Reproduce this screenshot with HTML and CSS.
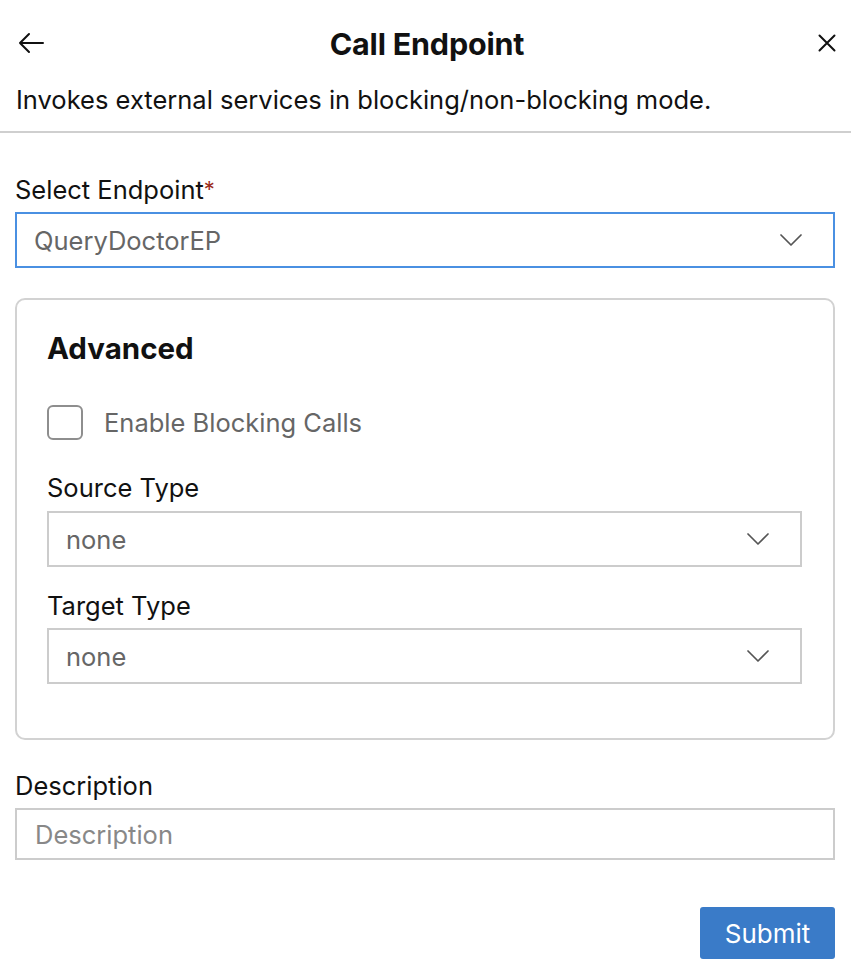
FILE: index.html
```html
<!DOCTYPE html>
<html lang="en">
<head>
<meta charset="utf-8">
<title>Call Endpoint</title>
<link rel="stylesheet" href="styles.css">
</head>
<body>
<div class="panel">
  <header class="header">
    <button class="icon-btn back" aria-label="Back">
      <svg width="26" height="22" viewBox="0 0 26 22" fill="none" stroke="#111" stroke-width="2" stroke-linecap="round" stroke-linejoin="round"><path d="M25 11H2M11 2L2 11l9 9"/></svg>
    </button>
    <h1 class="title">Call Endpoint</h1>
    <button class="icon-btn close" aria-label="Close">
      <svg width="18" height="18" viewBox="0 0 18 18" fill="none" stroke="#111" stroke-width="2" stroke-linecap="round"><path d="M1.5 1.5l15 15M16.5 1.5l-15 15"/></svg>
    </button>
  </header>
  <p class="subtitle">Invokes external services in blocking/non-blocking mode.</p>

  <form class="form">
    <label class="label">Select Endpoint<span class="req">*</span></label>
    <div class="select select-active">
      <span class="select-value">QueryDoctorEP</span>
      <svg class="chev" width="22" height="12" viewBox="0 0 22 12" fill="none" stroke="#555" stroke-width="1.7" stroke-linecap="round" stroke-linejoin="round"><path d="M1 1l10 10L21 1"/></svg>
    </div>

    <section class="card">
      <h2 class="card-title">Advanced</h2>
      <div class="check-row">
        <span class="checkbox"></span>
        <span class="check-label">Enable Blocking Calls</span>
      </div>
      <label class="label label-source">Source Type</label>
      <div class="select">
        <span class="select-value">none</span>
        <svg class="chev" width="22" height="12" viewBox="0 0 22 12" fill="none" stroke="#555" stroke-width="1.7" stroke-linecap="round" stroke-linejoin="round"><path d="M1 1l10 10L21 1"/></svg>
      </div>
      <label class="label label-target">Target Type</label>
      <div class="select">
        <span class="select-value">none</span>
        <svg class="chev" width="22" height="12" viewBox="0 0 22 12" fill="none" stroke="#555" stroke-width="1.7" stroke-linecap="round" stroke-linejoin="round"><path d="M1 1l10 10L21 1"/></svg>
      </div>
    </section>

    <label class="label label-desc">Description</label>
    <div class="input"><span class="placeholder">Description</span></div>

    <div class="actions">
      <button type="button" class="submit">Submit</button>
    </div>
  </form>
</div>
</body>
</html>
```

FILE: styles.css
```css
* { box-sizing: border-box; }
html, body {
  margin: 0;
  background: #fff;
  font-family: Inter, "Noto Sans", "Liberation Sans", sans-serif;
  color: #111;
}
.panel { width: 851px; }
.header {
  height: 86px;
  display: flex;
  align-items: center;
  justify-content: space-between;
  padding: 0 15px 0 18px;
}
.icon-btn {
  background: none;
  border: 0;
  padding: 0;
  width: 26px;
  height: 24px;
  display: flex;
  align-items: center;
}
.back { justify-content: flex-start; }
.close { justify-content: flex-end; }
.title {
  margin: 0;
  font-size: 30.5px;
  font-weight: 700;
  letter-spacing: -0.2px;
}
.subtitle {
  margin: 0;
  font-size: 25.5px;
  line-height: 28px;
  padding: 0 16px 17px;
  border-bottom: 2px solid #cfcfcf;
}
.form {
  padding: 42px 16px 0 15px;
  display: flex;
  flex-direction: column;
}
.label {
  display: block;
  font-size: 25.5px;
  line-height: 28px;
  margin-bottom: 8px;
  color: #111;
}
.req { color: #9b2c1c; font-size: 22px; vertical-align: 2px; }
.select {
  height: 56px;
  border: 2px solid #cccccc;
  display: flex;
  align-items: center;
  justify-content: space-between;
  padding: 0 31px 0 17px;
}
.select-active { border-color: #4a90e2; }
.select-value {
  font-size: 25.5px;
  color: #666;
}
.chev { display: block; }
.card {
  margin-top: 30px;
  border: 2px solid #d2d2d2;
  border-radius: 10px;
  padding: 31px 31px 54px 30px;
}
.card-title {
  margin: 0;
  font-size: 29.5px;
  line-height: 34px;
  font-weight: 700;
}
.check-row {
  margin-top: 40px;
  display: flex;
  align-items: center;
  gap: 21px;
  height: 34px;
}
.checkbox {
  width: 36px;
  height: 35px;
  border: 2px solid #8e8e8e;
  border-radius: 6px;
}
.check-label {
  font-size: 25.5px;
  color: #666;
}
.label-source { margin-top: 35px; margin-bottom: 9px; }
.label-target { margin-top: 25px; }
.label-desc { margin-top: 32px; }
.input {
  height: 52px;
  border: 2px solid #cccccc;
  display: flex;
  align-items: center;
  padding: 0 18px;
}
.placeholder {
  font-size: 25.5px;
  color: #888;
}
.actions {
  display: flex;
  justify-content: flex-end;
  margin-top: 47px;
}
.submit {
  width: 135px;
  height: 52px;
  background: #3a7bc8;
  color: #fff;
  border: 0;
  border-radius: 3px;
  font-family: inherit;
  font-size: 26px;
}
```
